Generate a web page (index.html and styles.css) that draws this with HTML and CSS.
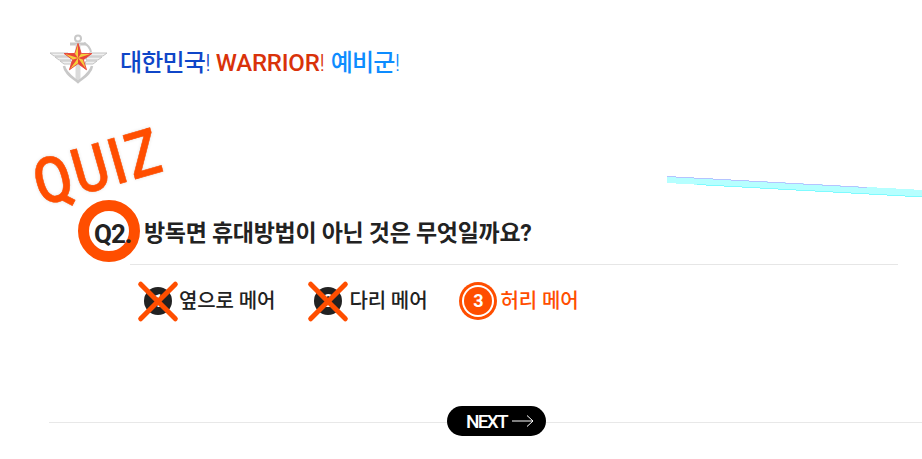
FILE: index.html
```html
<!DOCTYPE html>
<html lang="ko">
<head>
  <meta charset="UTF-8">
  <meta name="viewport" content="width=device-width, initial-scale=1.0">
  <title>QUIZ</title>
  <link rel="stylesheet" href="styles.css">
</head>
<body>
  <header class="header">
    <svg class="logo" viewBox="0 0 60 50" width="60" height="50" aria-hidden="true">
      <g fill="none" stroke="#c8c8c8">
        <circle cx="29" cy="4.500" r="3" stroke-width="2"/>
        <path d="M21 10h16" stroke-width="3"/>
        <path d="M29 10v36" stroke-width="5" stroke="#dadada"/>
        <path d="M15 32c1 7 8 11 14 16c6-5 13-9 14-16" stroke-width="2.500"/>
        <path d="M35 9c4 2 6 5 7 9" stroke-width="2"/>
      </g>
      <g fill="#f0f0f0" stroke="#c2c2c2" stroke-width="1">
        <path d="M1 19h18l2 3H5z"/>
        <path d="M6 23h15l1 3H10z"/>
        <path d="M11 27h11l1 3H15z"/>
        <path d="M58 19H40l-2 3h16z"/>
        <path d="M53 23H38l-1 3h12z"/>
        <path d="M48 27H37l-1 3h8z"/>
      </g>
      <g transform="translate(29 24) scale(1.12) translate(-29 -24)">
        <polygon points="29,11 31.900,20 41.400,20 33.800,25.500 36.600,34.500 29,29 21.400,34.500 24.200,25.500 16.600,20 26.100,20" fill="#f5cf3c" stroke="#e8433a" stroke-width="0.800"/>
        <path d="M29 24V11l2.900 9zM29 24l12.400-4-7.600 5.500zM29 24l7.600 10.500L29 29zM29 24l-7.600 10.500 2.800-9zM29 24 16.600 20h9.500z" fill="#e8433a"/>
      </g>
    </svg>
    <h1 class="slogan">
      <span class="navy">대한민국<i>!</i></span>
      <span class="red">WARRIOR<i>!</i></span>
      <span class="sky">예비군<i>!</i></span>
    </h1>
  </header>

  <main class="quiz">
    <div class="quiz-tag">QUIZ</div>
    <svg class="streak" viewBox="0 0 256 28" width="256" height="28" shape-rendering="crispEdges" aria-hidden="true">
      <polygon points="0,0 256,14 256,21 0,7" fill="#b6ffff"/>
      <polygon points="0,0 200,11 200,12 0,1" fill="#b5c4ff"/>
      <polygon points="30,8 256,20.500 256,21.500 30,9" fill="#7ffbff"/>
    </svg>

    <h2 class="question">
      <span class="ring"></span>
      <span class="q-num">Q2.</span>
      <span>방독면 휴대방법이 아닌 것은 무엇일까요?</span>
    </h2>

    <ul class="options">
      <li class="option wrong">
        <span class="num">1</span>
        <span>옆으로 메어</span>
      </li>
      <li class="option wrong">
        <span class="num">2</span>
        <span>다리 메어</span>
      </li>
      <li class="option answer">
        <span class="num">3</span>
        <span>허리 메어</span>
      </li>
    </ul>
  </main>

  <footer class="footer">
    <button class="next-btn">
      NEXT
      <svg viewBox="0 0 22 12" width="22" height="12" aria-hidden="true">
        <path d="M0 6h21M15 .5 21 6l-6 5.500" fill="none" stroke="#fff" stroke-width="1"/>
      </svg>
    </button>
  </footer>
</body>
</html>
```

FILE: styles.css
```css
* {
  box-sizing: border-box;
}
html, body {
  height: 100%;
}
body {
  margin: 0;
  overflow: hidden;
  background: #fff;
  color: #222;
  font-family: Roboto, 'Noto Sans CJK KR', sans-serif;
}
.header {
  display: flex;
  align-items: center;
  gap: 11px;
  padding: 34px 0 0 49px;
}
.logo {
  flex: none;
}
.slogan {
  display: flex;
  gap: 6px;
  margin: 0;
  padding-top: 8px;
  font-size: 24px;
  font-weight: 500;
  line-height: 34px;
  letter-spacing: -0.8px;
}
.slogan i {
  font-style: normal;
  font-weight: 300;
}
.navy { color: #0f46c8; }
.red {
  color: #d9320a;
  letter-spacing: -0.2px;
}
.sky { color: #0d8cff; }

.quiz {
  position: relative;
  height: 338px;
}
.quiz-tag {
  position: absolute;
  left: 21px;
  top: 52px;
  color: #ff4e00;
  font-size: 64px;
  font-weight: 500;
  line-height: 1;
  letter-spacing: 3px;
  -webkit-text-stroke: 0.6px #ff4e00;
  text-shadow: 0 0 4px rgba(0, 0, 0, 0.15);
  transform: rotate(-16deg) scaleX(0.85);
}
.streak {
  position: absolute;
  left: 667px;
  top: 92px;
}
.question {
  position: relative;
  display: flex;
  align-items: center;
  gap: 5px;
  height: 181px;
  margin: 0 24px 0 130px;
  padding: 125px 0 5px;
  border-bottom: 1px solid #e6e6e6;
  font-size: 23px;
  font-weight: 700;
  line-height: 32px;
  letter-spacing: -0.3px;
}
.q-num {
  position: relative;
  flex: none;
  width: 45px;
  margin-left: -36px;
  font-size: 26px;
  font-weight: 700;
  letter-spacing: -1px;
}
.ring {
  position: absolute;
  left: -52px;
  top: 116px;
  width: 62px;
  height: 62px;
  border: 11px solid #ff4e00;
  border-radius: 50%;
}
.options {
  display: flex;
  gap: 39px;
  margin: 0;
  padding: 17px 0 0 144px;
  list-style: none;
  font-size: 20px;
  font-weight: 500;
  line-height: 38px;
  letter-spacing: -0.1px;
}
.option {
  display: flex;
  align-items: center;
  gap: 7px;
}
.num {
  position: relative;
  display: flex;
  align-items: center;
  justify-content: center;
  width: 28px;
  height: 28px;
  border-radius: 50%;
  background: #222;
  color: #fff;
  font-size: 18px;
  font-weight: 700;
}
.wrong .num::before,
.wrong .num::after {
  content: "";
  position: absolute;
  left: -13px;
  top: 11.500px;
  width: 54px;
  height: 5px;
  border-radius: 3px;
  background: #ff4e00;
  transform: rotate(45deg);
}
.wrong .num::after {
  transform: rotate(-45deg);
}
.answer {
  gap: 8px;
  margin-left: -7px;
  color: #ff4e00;
}
.answer .num {
  margin-left: 5px;
  background: #ff4e00;
  box-shadow: 0 0 0 2px #fff, 0 0 0 5px #ff4e00;
}
.footer {
  display: flex;
  align-items: flex-start;
  height: 1px;
  margin-left: 49px;
  padding-left: 398px;
  background: #e8e8e8;
}
.next-btn {
  flex: none;
  display: flex;
  align-items: center;
  gap: 5px;
  width: 99px;
  height: 30px;
  margin-top: -16px;
  padding: 0 0 0 19px;
  border: 0;
  border-radius: 15px;
  background: #000;
  color: #fff;
  font-family: inherit;
  font-size: 19px;
  font-weight: 500;
  letter-spacing: -1.7px;
}
```
